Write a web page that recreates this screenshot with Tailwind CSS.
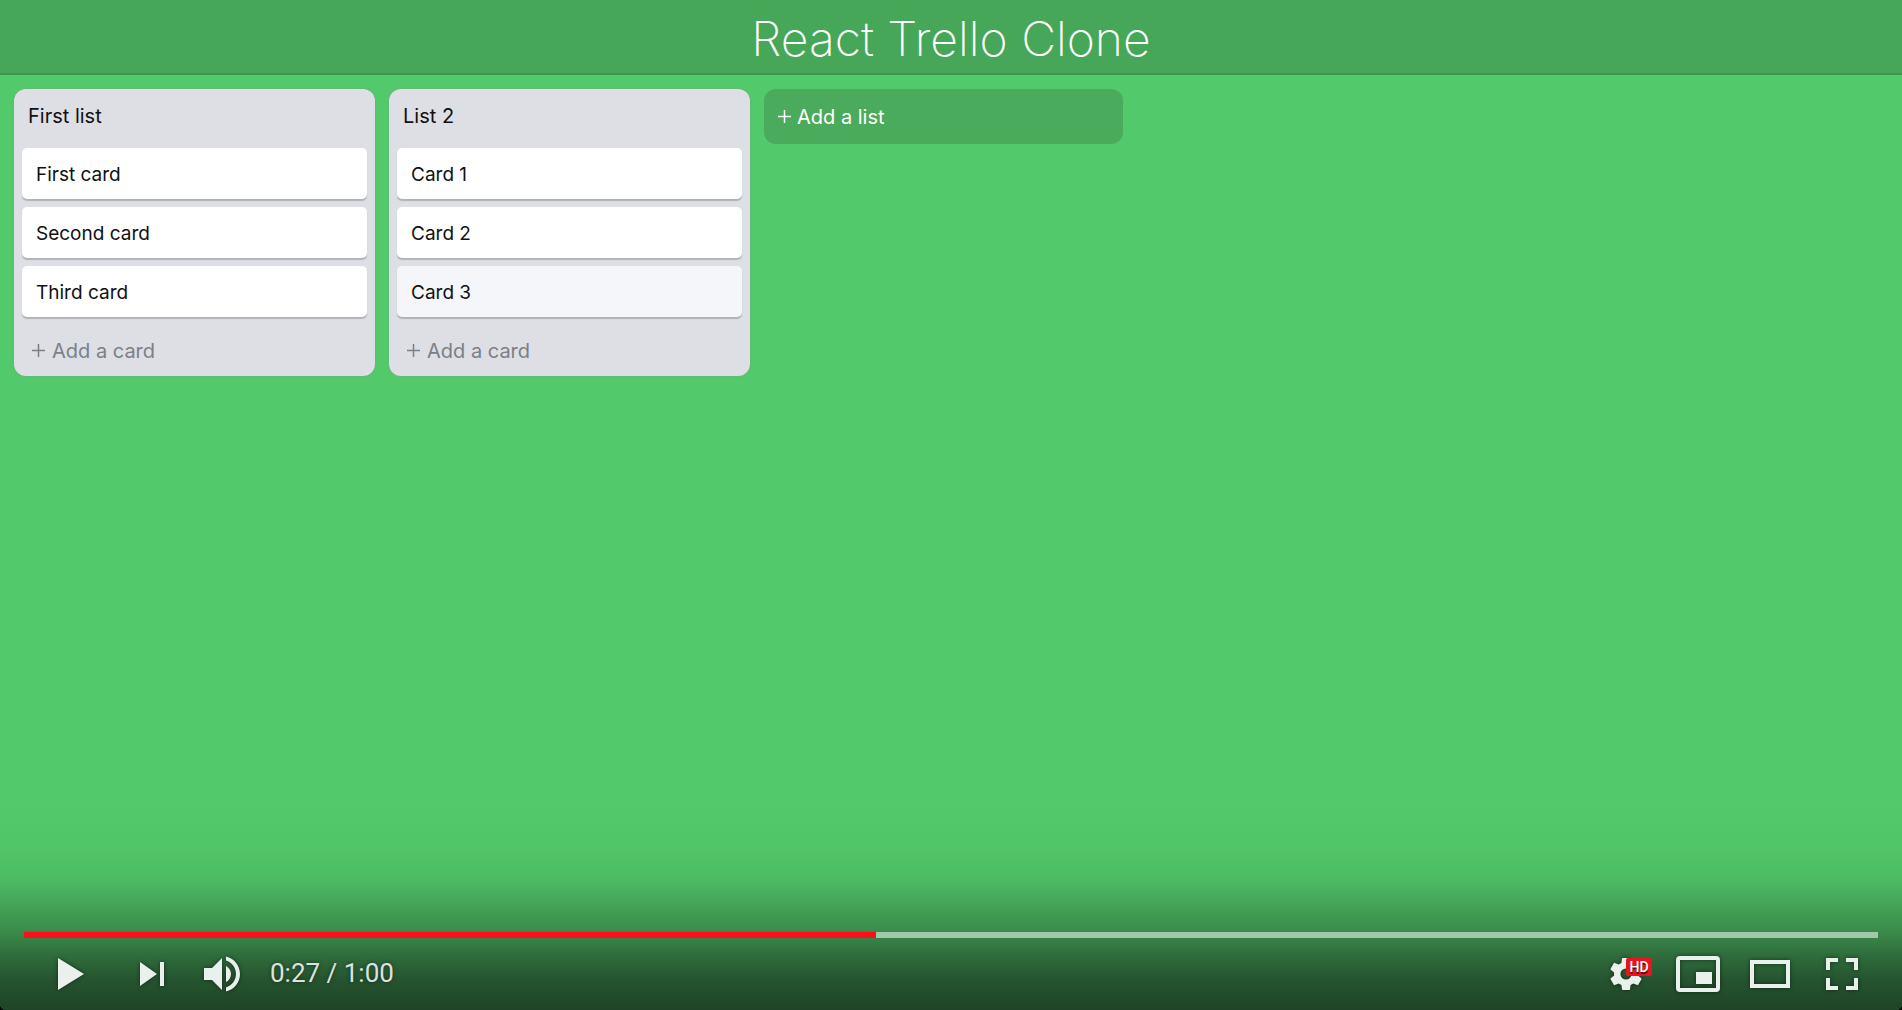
<!DOCTYPE html>
<html lang="en">
<head>
<meta charset="utf-8">
<title>React Trello Clone</title>
<script src="https://cdn.jsdelivr.net/npm/@tailwindcss/browser@4"></script>
</head>
<body class="bg-black">
<div class="relative flex min-h-screen flex-col overflow-hidden rounded-b-md bg-[#52c96a] font-['Inter',sans-serif] text-xl text-[#111]">
  <header class="flex h-[75px] items-center justify-center border-b-2 border-[#3f964f] bg-[#46a759] pt-1">
    <h1 class="text-5xl font-extralight text-white">React Trello Clone</h1>
  </header>

  <main class="flex items-start gap-[14px] p-[14px]">
    <section class="w-[361px] rounded-xl bg-[#dddfe4] px-2 shadow-[0_0_2px_#8a9a90]">
      <h2 class="flex h-[59px] items-start px-[6px] pt-3 leading-[30px]">First list</h2>
      <ul class="flex flex-col gap-2 text-[19px]">
        <li class="flex h-[51px] items-center rounded-[5px] bg-white px-[14px] pt-1 shadow-[0_2px_1px_#b0b2b8]">First card</li>
        <li class="flex h-[51px] items-center rounded-[5px] bg-white px-[14px] pt-1 shadow-[0_2px_1px_#b0b2b8]">Second card</li>
        <li class="flex h-[51px] items-center rounded-[5px] bg-white px-[14px] pt-1 shadow-[0_2px_1px_#b0b2b8]">Third card</li>
      </ul>
      <button class="flex h-[59px] w-full items-center gap-[7px] px-[10px] pt-2 text-[#7b8088]">
        <svg class="size-[13px]" viewBox="0 0 13 13" fill="none" stroke="currentColor" stroke-width="1.5"><path d="M6.5 0v13M0 6.5h13"/></svg>Add a card</button>
    </section>

    <section class="w-[361px] rounded-xl bg-[#dddfe4] px-2 shadow-[0_0_2px_#8a9a90]">
      <h2 class="flex h-[59px] items-start px-[6px] pt-3 leading-[30px]">List 2</h2>
      <ul class="flex flex-col gap-2 text-[19px]">
        <li class="flex h-[51px] items-center rounded-[5px] bg-white px-[14px] pt-1 shadow-[0_2px_1px_#b0b2b8]">Card 1</li>
        <li class="flex h-[51px] items-center rounded-[5px] bg-white px-[14px] pt-1 shadow-[0_2px_1px_#b0b2b8]">Card 2</li>
        <li class="flex h-[51px] items-center rounded-[5px] bg-[#f5f6f9] px-[14px] pt-1 shadow-[0_2px_1px_#b0b2b8]">Card 3</li>
      </ul>
      <button class="flex h-[59px] w-full items-center gap-[7px] px-[10px] pt-2 text-[#7b8088]">
        <svg class="size-[13px]" viewBox="0 0 13 13" fill="none" stroke="currentColor" stroke-width="1.5"><path d="M6.5 0v13M0 6.5h13"/></svg>Add a card</button>
    </section>

    <button class="flex h-[55px] w-[359px] items-center gap-[6px] rounded-xl bg-[#49ab5b] px-[14px] text-white">
      <svg class="size-[13px]" viewBox="0 0 13 13" fill="none" stroke="currentColor" stroke-width="1.5"><path d="M6.5 0v13M0 6.5h13"/></svg>Add a list</button>
  </main>

  <div class="absolute inset-x-0 bottom-0 flex h-[210px] flex-col justify-end bg-[linear-gradient(to_bottom,rgba(12,18,14,0)_0px,rgba(12,18,14,0.02)_50px,rgba(12,18,14,0.08)_80px,rgba(12,18,14,0.18)_100px,rgba(12,18,14,0.34)_132px,rgba(12,18,14,0.50)_155px,rgba(12,18,14,0.64)_180px,rgba(12,18,14,0.73)_210px)] px-6 text-[#eaf0eb]">
    <div class="h-[6px] w-full bg-[#a1c8a8]" role="progressbar" aria-label="Played" aria-valuenow="27" aria-valuemin="0" aria-valuemax="60">
      <div class="h-full bg-[#ff0d1a]" style="width:45.950%"></div>
    </div>
    <div class="flex h-[72px] items-center [&_svg]:drop-shadow-[0_0_2px_rgba(0,0,0,0.5)]">
      <button class="flex w-[92px] justify-center" aria-label="Play">
        <svg class="size-[72px]" viewBox="0 0 36 36" fill="currentColor"><path d="M12 26l13-8-13-8z"/></svg></button>
      <button aria-label="Next">
        <svg class="size-[72px]" viewBox="0 0 36 36" fill="currentColor"><path d="M12 24l8.500-6L12 12zM22 12v12h2V12z"/></svg></button>
      <button aria-label="Mute">
        <svg class="size-[72px]" viewBox="0 0 36 36" fill="currentColor"><path d="M8 21h4l5 5V10l-5 5H8zM19 14v8c1.480-.680 2.500-2.230 2.500-4 0-1.740-1.020-3.260-2.500-4zM19 11.290c2.890.860 5 3.540 5 6.710s-2.110 5.850-5 6.710v2.060c4.010-.910 7-4.490 7-8.770s-2.990-7.860-7-8.770z"/></svg></button>
      <div class="pb-[2px] pl-[10px] font-['Roboto',sans-serif] text-[26px] text-[#dde2de] [text-shadow:0_0_4px_rgba(0,0,0,0.5)]">0:27 / 1:00</div>
      <div class="ml-auto flex">
        <button class="relative" aria-label="Settings">
          <svg class="size-[72px]" viewBox="0 0 36 36" fill="currentColor" fill-rule="evenodd"><path d="m23.940 18.780c.030-.250.050-.510.050-.780s-.020-.520-.050-.780l1.680-1.320c.150-.120.190-.330.090-.510l-1.600-2.760c-.090-.170-.310-.240-.480-.170l-1.990.800c-.410-.320-.860-.580-1.350-.780l-.300-2.120c-.020-.190-.190-.330-.390-.330h-3.200c-.200 0-.360.140-.390.330l-.300 2.120c-.480.200-.930.470-1.350.780l-1.990-.800c-.180-.070-.390 0-.480.170l-1.600 2.760c-.100.170-.050.390.090.510l1.680 1.320c-.030.250-.050.520-.050.780s.020.520.050.780l-1.680 1.320c-.150.120-.190.330-.090.510l1.600 2.760c.090.170.310.240.480.170l1.990-.800c.410.320.860.580 1.350.780l.300 2.120c.020.190.190.330.390.330h3.200c.200 0 .360-.140.390-.330l.300-2.120c.480-.200.930-.470 1.350-.780l1.990.800c.180.070.390 0 .480-.170l1.600-2.760c.090-.170.050-.390-.090-.510zM18 20.800a2.800 2.800 0 1 1 0-5.600 2.800 2.800 0 0 1 0 5.600z"/></svg>
          <span class="absolute left-9 top-5 flex h-[18px] w-[26px] items-center justify-center rounded-[2px] bg-[#e8141e] font-['Roboto',sans-serif] text-sm font-medium leading-none text-white [text-shadow:0_2px_0_#5a0a0a]">HD</span>
        </button>
        <button aria-label="Miniplayer">
          <svg class="size-[72px]" viewBox="0 0 36 36" fill="currentColor" fill-rule="evenodd"><path d="M25 17h-8v6h8zM29 25V11a2 2 0 0 0-2-2H9a2 2 0 0 0-2 2v14a2 2 0 0 0 2 2h18a2 2 0 0 0 2-2zM27 25H9V11h18z"/></svg></button>
        <button aria-label="Theater mode">
          <svg class="size-[72px]" viewBox="0 0 36 36" fill="currentColor" fill-rule="evenodd"><path d="M28 11v14H8V11zM10 13v10h16V13z"/></svg></button>
        <button aria-label="Full screen">
          <svg class="size-[72px]" viewBox="0 0 36 36" fill="currentColor"><path d="M10 16h2v-4h4v-2h-6zM20 10v2h4v4h2v-6zM24 24h-4v2h6v-6h-2zM12 20h-2v6h6v-2h-4z"/></svg></button>
      </div>
    </div>
  </div>
</div>
</body>
</html>
